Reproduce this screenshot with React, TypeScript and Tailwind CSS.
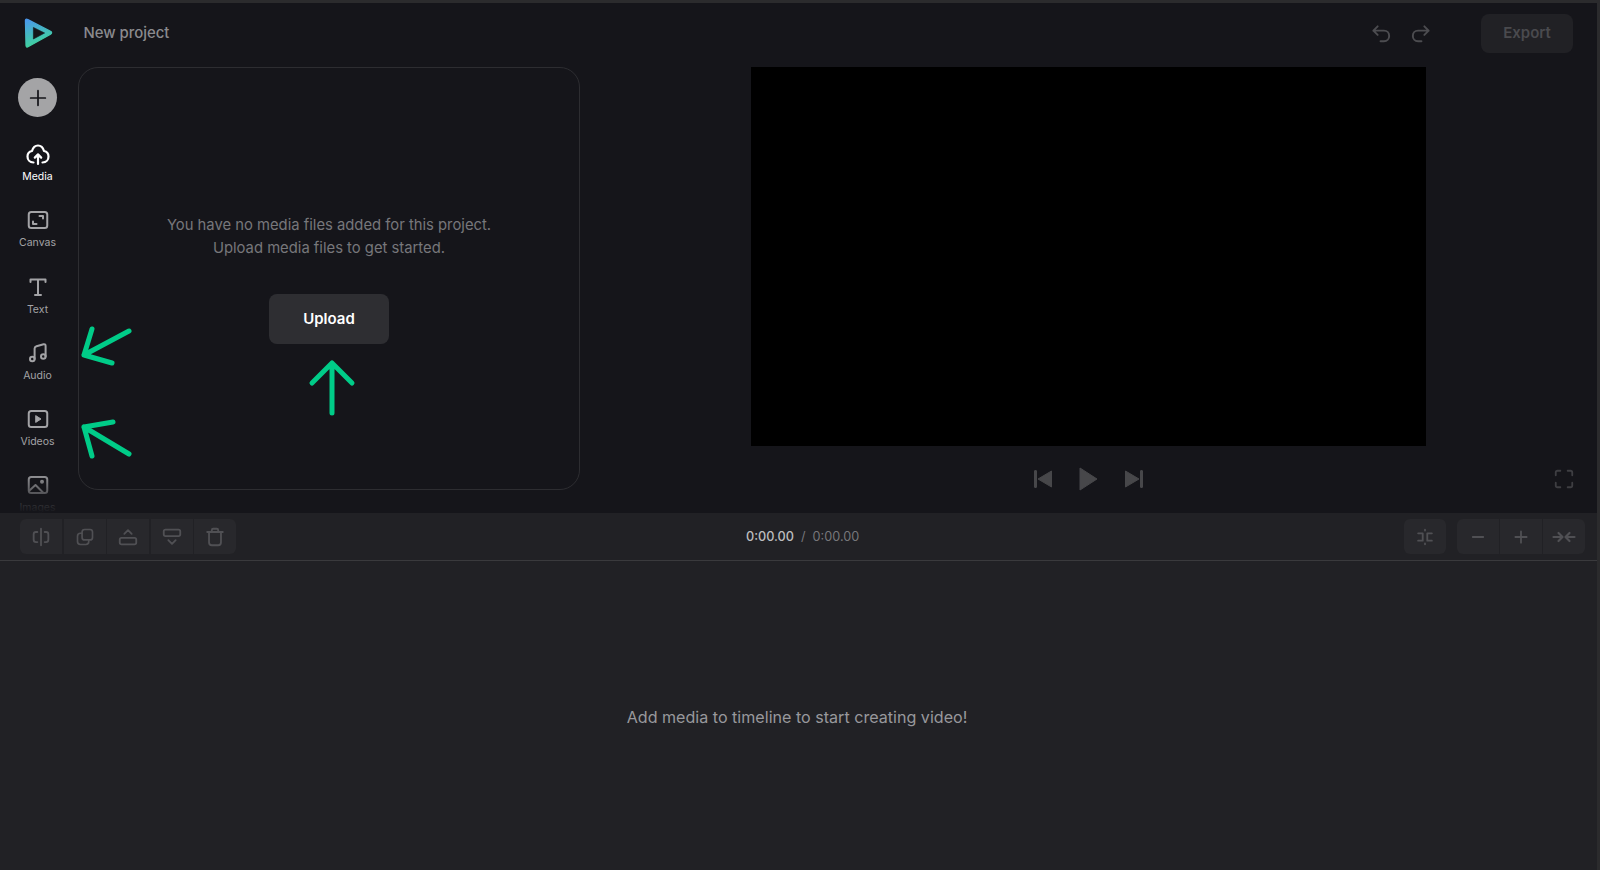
import { ReactNode } from 'react';

const font = { fontFamily: 'Inter, "Noto Sans", sans-serif' };

function Icon({ size = 24, children, className = '' }: { size?: number; children: ReactNode; className?: string }) {
  return (
    <svg width={size} height={size} viewBox="0 0 24 24" fill="none" stroke="currentColor" strokeWidth="2" strokeLinecap="round" strokeLinejoin="round" className={className}>
      {children}
    </svg>
  );
}

function NavItem({ label, active, children }: { label: string; active?: boolean; children: ReactNode }) {
  return (
    <div className={`flex h-[66.3px] shrink-0 flex-col items-center pt-[10px] ${active ? 'text-white' : 'text-[#a3a3a6]'}`}>
      {children}
      <span className="mt-[4px] text-[10.5px] leading-[14px]">{label}</span>
    </div>
  );
}

function ToolButton({ children, className = '' }: { children: ReactNode; className?: string }) {
  return <div className={`flex h-[35px] w-[42px] items-center justify-center bg-[#28282c] text-[#505054] ${className}`}>{children}</div>;
}

export default function App() {
  return (
    <div className="relative flex h-[870px] w-[1600px] flex-col overflow-hidden bg-[#2b2b2d]" style={font}>
      {/* Top strip */}
      <div className="h-[3px] shrink-0" />

      <div className="flex min-h-0 flex-1 flex-col mr-[3px] bg-[#15151a]">
        <div className="flex h-[510px] shrink-0">
          {/* Sidebar */}
          <aside className="relative flex w-[78px] shrink-0 flex-col items-center overflow-hidden pr-[3px]">
            <svg width="30" height="32" viewBox="0 0 30 32" className="mt-[14px] ml-[1px] shrink-0">
              <defs>
                <linearGradient id="logoFill" x1="0" y1="0" x2="0.3" y2="1">
                  <stop offset="0" stopColor="#4a97f0" />
                  <stop offset="0.55" stopColor="#45b8c0" />
                  <stop offset="1" stopColor="#3fd59c" />
                </linearGradient>
              </defs>
              <path d="M4.4 2.4 C3.4 1.8 2.4 2.4 2.4 3.6 L3 28.6 C3 29.8 4 30.4 5 29.8 L27.6 17.2 C29 16.4 29 15 27.6 14.4 Z" fill="url(#logoFill)" stroke="url(#logoFill)" strokeWidth="1.2" strokeLinejoin="round" />
              <path d="M10.4 10.4 L21.6 16 L10.4 22 Z" fill="#15151a" stroke="#15151a" strokeWidth="0.6" strokeLinejoin="round" />
            </svg>

            <div className="mt-[29px] flex h-[39px] w-[39px] shrink-0 items-center justify-center rounded-full bg-[#a4a4a6] text-[#15151a]">
              <Icon size={22} className="stroke-[1.9]">
                <path d="M12 4v16M4 12h16" />
              </Icon>
            </div>

            <div className="mt-[15px] flex w-full flex-col">
              <NavItem label="Media" active>
                <Icon className="stroke-[2.2]">
                  <path d="M7.5 20.5 C3.5 20.5 1.5 17.5 1.5 14.5 C1.5 11.5 3.5 9.5 6 9 C7 5.5 9 3.5 12 3.5 C15 3.5 17 5.5 18 9 C20.5 9.5 22.5 11.5 22.5 14.5 C22.5 17.5 20.5 20.5 16.5 20.5" />
                  <path d="M12 22 V13 M8.8 15.6 L12 12.4 L15.2 15.6" />
                </Icon>
              </NavItem>
              <NavItem label="Canvas">
                <Icon>
                  <rect x="2.75" y="4" width="18.5" height="16" rx="2.5" />
                  <path d="M13.5 8 H17 V10.5 M7 13.5 V16 H10.5" />
                </Icon>
              </NavItem>
              <NavItem label="Text">
                <Icon>
                  <path d="M4.5 7 V4.5 H19.5 V7 M12 4.5 V20 M9 20 H15" />
                </Icon>
              </NavItem>
              <NavItem label="Audio">
                <Icon>
                  <path d="M8.6 18 V7.6 C8.6 6.4 9.4 5.6 10.5 5.2 L17.6 3.2 C19 2.9 19.6 3.8 19.6 5 V15.5" />
                  <circle cx="6.3" cy="18" r="2.3" />
                  <circle cx="17.3" cy="15.5" r="2.3" />
                </Icon>
              </NavItem>
              <NavItem label="Videos">
                <Icon>
                  <rect x="2.75" y="4" width="18.5" height="16" rx="2.5" />
                  <path d="M10 8.8 L15 12 L10 15.2 Z" fill="currentColor" strokeWidth="1" />
                </Icon>
              </NavItem>
              <NavItem label="Images">
                <Icon>
                  <rect x="2.75" y="4" width="18.5" height="16" rx="2.5" />
                  <path d="M3.5 17.5 L9.5 12 L17 19.5" />
                  <circle cx="16" cy="8.8" r="1" fill="currentColor" />
                </Icon>
              </NavItem>
            </div>
            {/* Fade over the last item */}
            <div className="absolute bottom-0 left-0 h-[43px] w-full bg-gradient-to-b from-transparent to-[#15151a]" />
          </aside>

          <div className="flex min-w-0 flex-1 flex-col">
            {/* Header */}
            <header className="flex h-[64px] shrink-0 items-center justify-between pr-[24px] pb-[3px]">
              <span className="ml-[5.5px] text-[14.9px] font-medium text-[#8a8a8e]">New project</span>
              <div className="flex items-center">
                <div className="mr-[49px] flex gap-[16px] text-[#4c4c50]">
                  <Icon size={23}>
                    <path d="M8 4.5 L3.5 9 L8 13.5 M3.5 9 H14.5 C18 9 20 11.5 20 14.5 C20 17.5 18 20 14.5 20 H11" />
                  </Icon>
                  <Icon size={23}>
                    <path d="M16 4.5 L20.5 9 L16 13.5 M20.5 9 H9.5 C6 9 4 11.5 4 14.5 C4 17.5 6 20 9.5 20 H13" />
                  </Icon>
                </div>
                <div className="flex h-[39px] w-[92px] items-center justify-center rounded-[8px] bg-[#212125] text-[15px] font-semibold text-[#4a4a4e]">
                  Export
                </div>
              </div>
            </header>

            <div className="flex min-h-0 flex-1">
              {/* Media panel */}
              <section className="flex h-[423px] w-[502px] shrink-0 flex-col items-center rounded-[20px] border border-[#2d2d31] pt-[146px]">
                <p className="text-center text-[14.8px] leading-[23px] text-[#77777b]">
                  You have no media files added for this project.
                  <br />
                  Upload media files to get started.
                </p>
                <button className="mt-[34px] h-[50px] w-[120px] rounded-[8px] bg-[#2e2e32] text-[15px] font-semibold text-white">Upload</button>
              </section>

              {/* Preview */}
              <section className="flex min-w-0 flex-1 flex-col items-center">
                <div className="h-[379px] w-[675px] bg-black" />
                <div className="relative mt-[18px] flex h-[30px] w-full items-center justify-center gap-[27px] text-[#47474a]">
                  <svg width="18" height="18" viewBox="0 0 18 18" fill="currentColor" stroke="currentColor" strokeLinejoin="round">
                    <rect x="0.5" y="0.5" width="2" height="17" rx="0.5" />
                    <path d="M17.5 1 V17 L4 9 Z" />
                  </svg>
                  <svg width="19" height="24" viewBox="0 0 19 24" fill="currentColor" stroke="currentColor" strokeLinejoin="round">
                    <path d="M1 1 L18 12 L1 23 Z" />
                  </svg>
                  <svg width="18" height="18" viewBox="0 0 18 18" fill="currentColor" stroke="currentColor" strokeLinejoin="round">
                    <rect x="15.5" y="0.5" width="2" height="17" rx="0.5" />
                    <path d="M0.5 1 V17 L14 9 Z" />
                  </svg>
                  <div className="absolute right-[22px] top-[4px] text-[#3e3e42]">
                    <Icon size={22}>
                      <path d="M3 8 V5 C3 3.8 3.8 3 5 3 H8 M16 3 H19 C20.2 3 21 3.8 21 5 V8 M21 16 V19 C21 20.2 20.2 21 19 21 H16 M8 21 H5 C3.8 21 3 20.2 3 19 V16" />
                    </Icon>
                  </div>
                </div>
              </section>
            </div>
          </div>
        </div>

        {/* Toolbar */}
        <div className="relative flex h-[48px] shrink-0 items-center justify-between border-b border-[#3a3a3d] bg-[#212125] pr-[12px] pl-[20px]">
          <div className="flex gap-[1.5px] overflow-hidden rounded-[6px]">
            <ToolButton>
              <Icon size={22}>
                <path d="M12 3 V21 M8 6.5 H6.5 C5 6.5 4 7.5 4 9 V15 C4 16.5 5 17.5 6.5 17.5 H8 M16 6.5 H17.5 C19 6.5 20 7.5 20 9 V15 C20 16.5 19 17.5 17.5 17.5 H16" />
              </Icon>
            </ToolButton>
            <ToolButton>
              <Icon size={20}>
                <rect x="8.5" y="3" width="12.5" height="12.5" rx="3" />
                <path d="M8.5 7.5 H6.5 C4.5 7.5 3 9 3 11 V17.5 C3 19.5 4.5 21 6.5 21 H13 C15 21 16.5 19.5 16.5 17.5 V15.5" />
              </Icon>
            </ToolButton>
            <ToolButton>
              <Icon size={22}>
                <rect x="3" y="13" width="18" height="7" rx="2" />
                <path d="M8 8.5 L12 4.5 L16 8.5" />
              </Icon>
            </ToolButton>
            <ToolButton>
              <Icon size={22}>
                <rect x="3" y="4" width="18" height="7" rx="2" />
                <path d="M8 15.5 L12 19.5 L16 15.5" />
              </Icon>
            </ToolButton>
            <ToolButton>
              <Icon size={22}>
                <path d="M3.5 6.5 H20.5 M8.5 6 V4.5 C8.5 3.5 9.2 3 10 3 H14 C14.8 3 15.5 3.5 15.5 4.5 V6 M5.5 6.5 V18 C5.5 19.8 6.8 21 8.5 21 H15.5 C17.2 21 18.5 19.8 18.5 18 V6.5" />
              </Icon>
            </ToolButton>
          </div>

          <div className="absolute left-[746px] flex items-center text-[12.7px]">
            <span className="font-medium text-[#bcbcbe]">0:00.00</span>
            <span className="mx-[7px] text-[#77777a]">/</span>
            <span className="text-[#77777a]">0:00.00</span>
          </div>

          <div className="flex items-center gap-[11px]">
            <ToolButton className="rounded-[6px]">
              <Icon size={22}>
                <path d="M4.5 8 H9.5 V16 H4.5 M19.5 8 H14.5 V16 H19.5 M12 4 V5 M12 19 V20" />
              </Icon>
            </ToolButton>
            <div className="flex gap-[1px] overflow-hidden rounded-[6px]">
              <ToolButton>
                <Icon size={18} className="stroke-[2.4]">
                  <path d="M5 12 H19" />
                </Icon>
              </ToolButton>
              <ToolButton>
                <Icon size={18} className="stroke-[2.4]">
                  <path d="M12 4.5 V19.5 M4.5 12 H19.5" />
                </Icon>
              </ToolButton>
              <ToolButton>
                <Icon size={24} className="stroke-[2.2]">
                  <path d="M1.5 12 H9.5 M6.5 8 L10.5 12 L6.5 16 M22.5 12 H14.5 M17.5 8 L13.5 12 L17.5 16" />
                </Icon>
              </ToolButton>
            </div>
          </div>
        </div>

        {/* Timeline */}
        <main className="flex flex-1 items-center justify-center bg-[#212125] pt-[4px] pr-[3px]">
          <p className="text-[16.1px] text-[#98989c]">Add media to timeline to start creating video!</p>
        </main>
      </div>

      {/* Green annotation arrows */}
      <svg width="1600" height="870" className="pointer-events-none absolute top-0 left-0" fill="none" stroke="#00cc88" strokeWidth="5" strokeLinecap="round" strokeLinejoin="round">
        <path d="M129 331 L84 355 M92 329 L84 355 L112 363" />
        <path d="M129 454 L84 427 M92 456 L84 427 L113 422" />
        <path d="M332 413 V363 M312 383 L332 363 L352 383" />
      </svg>
    </div>
  );
}
